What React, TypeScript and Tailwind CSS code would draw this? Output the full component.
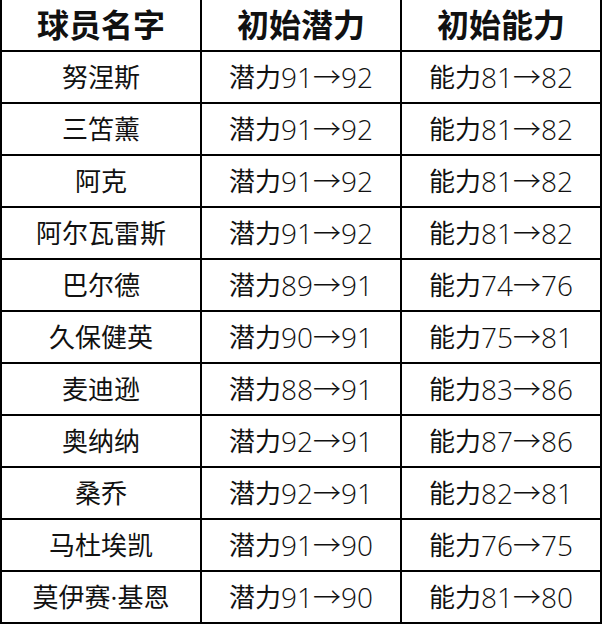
const rows: [string, string, string][] = [
  ["努涅斯", "91→92", "81→82"],
  ["三笘薰", "91→92", "81→82"],
  ["阿克", "91→92", "81→82"],
  ["阿尔瓦雷斯", "91→92", "81→82"],
  ["巴尔德", "89→91", "74→76"],
  ["久保健英", "90→91", "75→81"],
  ["麦迪逊", "88→91", "83→86"],
  ["奥纳纳", "92→91", "87→86"],
  ["桑乔", "92→91", "82→81"],
  ["马杜埃凯", "91→90", "76→75"],
  ["莫伊赛·基恩", "91→90", "81→80"],
];

const cell =
  "border-r-2 border-black flex items-center justify-center text-[26px] leading-none font-['Open_Sans','Noto_Sans_CJK_SC',sans-serif]";

export default function App() {
  return (
    <div className="w-[602px] h-[626px] bg-white text-[#111] font-['Noto_Sans_CJK_SC',sans-serif]">
      <div className="border-l-2 border-black">
        <div className="grid grid-cols-[200px_200px_200px] h-[52px] border-b-2 border-black">
          {["球员名字", "初始潜力", "初始能力"].map((h) => (
            <div
              key={h}
              className="border-r-2 border-black flex items-center justify-center text-[32px] font-bold leading-none pb-[4px]"
            >
              {h}
            </div>
          ))}
        </div>
        {rows.map((r) => (
          <div
            key={r[0]}
            className="grid grid-cols-[200px_200px_200px] h-[52px] border-b-2 border-black"
          >
            <div className={cell}>{r[0]}</div>
            <div className={cell}>
              潜力<span className="text-[28px] font-light">{r[1]}</span>
            </div>
            <div className={cell}>
              能力<span className="text-[28px] font-light">{r[2]}</span>
            </div>
          </div>
        ))}
      </div>
    </div>
  );
}
